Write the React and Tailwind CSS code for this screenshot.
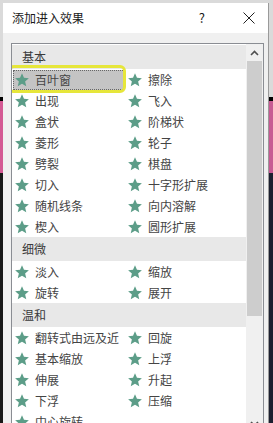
const groups = [
  {
    title: '基本',
    items: ['百叶窗', '擦除', '出现', '飞入', '盒状', '阶梯状', '菱形', '轮子', '劈裂', '棋盘', '切入', '十字形扩展', '随机线条', '向内溶解', '楔入', '圆形扩展'],
  },
  { title: '细微', items: ['淡入', '缩放', '旋转', '展开'] },
  {
    title: '温和',
    items: ['翻转式由远及近', '回旋', '基本缩放', '上浮', '伸展', '升起', '下浮', '压缩', '中心旋转'],
  },
];

const Star = () => (
  <svg width="14" height="14" viewBox="1 1 22 22" className="shrink-0">
    <path
      d="M12 1.5l3.1 7.1 7.7.6-5.9 5.1 1.8 7.6L12 17.8l-6.7 4.1 1.8-7.6-5.9-5.1 7.7-.6z"
      fill="#5c9d88"
    />
  </svg>
);

function Item({ label, selected }) {
  return (
    <div className="relative h-[21px] flex items-center">
      {selected && (
        <>
          <div className="absolute left-[1px] top-[1px] w-[112px] h-[20px] bg-[#c4c4c4] border border-dotted border-[#666]" />
          <div className="absolute left-[-4px] top-[-4px] w-[118px] h-[28px] rounded-[6px] border-[3px] border-[#e6e63a]" />
        </>
      )}
      <div className="relative flex items-center gap-[6px] pl-[3px]">
        <Star />
        <span className="text-[12px] leading-none text-[#444] whitespace-nowrap">{label}</span>
      </div>
    </div>
  );
}

export default function App() {
  return (
    <div
      className="w-[273px] h-[423px] overflow-hidden flex flex-col bg-[#1a1a1a]"
      style={{ fontFamily: '"Noto Sans CJK SC", "Microsoft YaHei", sans-serif' }}
    >
      {/* top frame */}
      <div className="h-[3px] shrink-0 bg-[#dadada]" />

      <div className="flex flex-1 min-h-0">
        {/* left backdrop */}
        <div className="w-[3px] flex flex-col shrink-0">
          <div className="h-[94px] bg-[#dadada]" />
          <div className="h-[4px] bg-black" />
          <div className="h-[72px] bg-[#d45a94]" />
          <div className="flex-1 bg-[#181818]" />
        </div>

        {/* dialog */}
        <div className="w-[266px] shrink-0 flex flex-col bg-[#f0f0f0] border-r border-[#9a9a9a]">
          <div className="h-[30px] shrink-0 bg-white flex items-center pl-[9px] pr-[13px]">
            <span className="text-[12px] text-[#1a1a1a]">添加进入效果</span>
            <span className="ml-auto mr-[38px] text-[13px] text-[#1a1a1a]">?</span>
            <svg width="12" height="12" viewBox="0 0 12 12">
              <path d="M0.5 0.5L11.5 11.5M11.5 0.5L0.5 11.5" stroke="#222" strokeWidth="1" />
            </svg>
          </div>

          <div className="flex-1 min-h-0 pt-[10px] pl-[8px]">
            <div className="w-[253px] h-[390px] flex bg-white border border-[#8a8d93]">
              <div className="w-[234px] pt-[1px] overflow-hidden">
                {groups.map((g) => (
                  <div key={g.title}>
                    <div className="h-[24px] bg-[#e8e8e8] flex items-center pl-[10px] text-[12px] text-[#3a3a3a]">
                      {g.title}
                    </div>
                    <div className="grid grid-cols-[113px_1fr]">
                      {g.items.map((label, i) => (
                        <Item key={label} label={label} selected={g.title === '基本' && i === 0} />
                      ))}
                    </div>
                  </div>
                ))}
              </div>

              {/* scrollbar */}
              <div className="w-[17px] flex flex-col bg-[#f0f0f0]">
                <div className="h-[17px] flex items-center justify-center">
                  <svg width="9" height="6" viewBox="0 0 9 6">
                    <path d="M1 5L4.5 1.5L8 5" stroke="#505050" strokeWidth="1.6" fill="none" />
                  </svg>
                </div>
                <div className="h-[255px] mx-[1px] bg-[#cdcdcd]" />
                <div className="flex-1" />
                <div className="h-[17px] flex items-center justify-center">
                  <svg width="9" height="6" viewBox="0 0 9 6">
                    <path d="M1 1L4.5 4.5L8 1" stroke="#505050" strokeWidth="1.6" fill="none" />
                  </svg>
                </div>
              </div>
            </div>
          </div>
        </div>

        {/* right backdrop */}
        <div className="flex-1 flex flex-col">
          <div className="h-[94px] bg-[#dadada]" />
          <div className="h-[4px] bg-black" />
          <div className="h-[72px] bg-[#c85a94]" />
          <div className="flex-1 bg-[#1c2030]" />
        </div>
      </div>
    </div>
  );
}
